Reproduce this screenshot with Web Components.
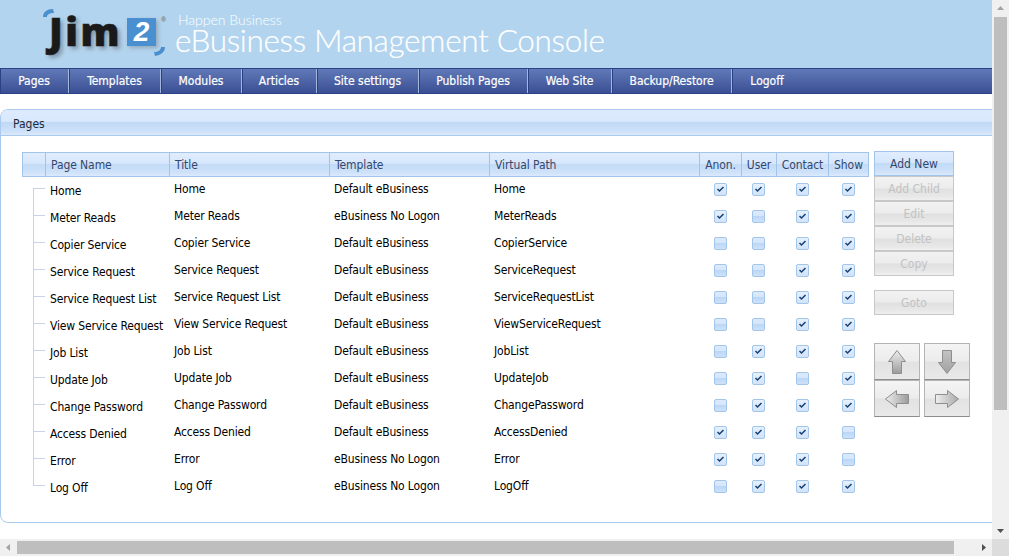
<!DOCTYPE html>
<html>
<head>
<meta charset="utf-8">
<title>eBusiness Management Console</title>
<style>
  html, body { margin: 0; height: 100%; overflow: hidden; background: #fff; }
  body { font: 12px "DejaVu Sans Condensed", "DejaVu Sans", sans-serif; color: #000; }
  jim-app { height: 556px; }
</style>
</head>
<body>
<jim-app>
  <jim-header></jim-header>
  <jim-nav></jim-nav>
  <jim-panel heading="Pages">
    <jim-pages></jim-pages>
    <jim-actions></jim-actions>
  </jim-panel>
</jim-app>
<script>
const PAGES = [
  ['Home', 'Home', 'Default eBusiness', 'Home', 1, 1, 1, 1],
  ['Meter Reads', 'Meter Reads', 'eBusiness No Logon', 'MeterReads', 1, 0, 1, 1],
  ['Copier Service', 'Copier Service', 'Default eBusiness', 'CopierService', 0, 0, 1, 1],
  ['Service Request', 'Service Request', 'Default eBusiness', 'ServiceRequest', 0, 0, 1, 1],
  ['Service Request List', 'Service Request List', 'Default eBusiness', 'ServiceRequestList', 0, 0, 1, 1],
  ['View Service Request', 'View Service Request', 'Default eBusiness', 'ViewServiceRequest', 0, 0, 1, 1],
  ['Job List', 'Job List', 'Default eBusiness', 'JobList', 0, 1, 1, 1],
  ['Update Job', 'Update Job', 'Default eBusiness', 'UpdateJob', 0, 1, 0, 1],
  ['Change Password', 'Change Password', 'Default eBusiness', 'ChangePassword', 0, 1, 1, 1],
  ['Access Denied', 'Access Denied', 'Default eBusiness', 'AccessDenied', 1, 1, 1, 0],
  ['Error', 'Error', 'eBusiness No Logon', 'Error', 1, 1, 1, 0],
  ['Log Off', 'Log Off', 'eBusiness No Logon', 'LogOff', 0, 1, 1, 1]
]
const COLUMNS = '24px 124px 160px 160px 210px 42px 34px 52px 41px'
const HEAD_COLUMNS = '22px 124px 160px 160px 210px 42px 35px 52px 40px'
const BLUE_BAR = 'linear-gradient(#e0edfd 0, #d6e6fb 48%, #c2dbf7 50%, #cfe2f9 85%, #dbe9fc 100%)'

customElements.define('jim-scrollbar', class extends HTMLElement {
  constructor() {
    super()
    this.attachShadow({mode: 'open'})
    const v = this.getAttribute('orient') === 'v'
    this.shadowRoot.innerHTML = `
    <style>
      :host { display: flex; background: #f0f0f0; flex-direction: ${v ? 'column' : 'row'}; }
      .end { flex: none; width: 17px; height: 17px; display: flex; align-items: center; justify-content: center; }
      .track { flex: 1; display: flex; flex-direction: ${v ? 'column' : 'row'}; padding: ${v ? '0 2px' : '2px 0'}; }
      .thumb { background: #bebebe; ${v ? 'height: 393px;' : 'width: 937px;'} }
      svg { display: block; }
    </style>
    <div class="end">
      <svg width="9" height="9" viewBox="0 0 9 9"><path d="${v ? 'M4.5 2L8 6H1z' : 'M6 1v7L2 4.5z'}" fill="#a3a3a3"/></svg>
    </div>
    <div class="track"><div class="thumb"></div></div>
    <div class="end">
      <svg width="9" height="9" viewBox="0 0 9 9"><path d="${v ? 'M1 3h7L4.5 7z' : 'M3 1v7l4-3.5z'}" fill="#505050"/></svg>
    </div>
    `
  }
})

customElements.define('jim-app', class extends HTMLElement {
  constructor() {
    super()
    this.attachShadow({mode: 'open'})
    this.shadowRoot.innerHTML = `
    <style>
      :host {
        display: grid;
        grid-template-columns: 992px 17px;
        grid-template-rows: 539px 17px;
        width: 1009px;
      }
      .main { overflow: hidden; display: flex; flex-direction: column; }
      .corner { background: #dcdcdc; }
    </style>
    <div class="main"><slot></slot></div>
    <jim-scrollbar orient="v"></jim-scrollbar>
    <jim-scrollbar orient="h"></jim-scrollbar>
    <div class="corner"></div>
    `
  }
})

customElements.define('jim-header', class extends HTMLElement {
  constructor() {
    super()
    this.attachShadow({mode: 'open'})
    this.shadowRoot.innerHTML = `
    <style>
      :host {
        display: flex;
        flex: none;
        height: 68px;
        background: #b3d4ee;
        padding-left: 42px;
        box-sizing: border-box;
        overflow: hidden;
      }
      .logo { position: relative; width: 133px; flex: none; }
      .jim {
        position: absolute;
        left: 7px;
        top: 6px;
        font: 900 39px/50px "Open Sans", "DejaVu Sans", sans-serif;
        letter-spacing: 2.5px;
        color: #1a1a1a;
        -webkit-text-stroke: .6px #1a1a1a;
        text-shadow: 3px 3px 4px #8496a8;
      }
      .two {
        position: absolute;
        left: 85px;
        top: 18px;
        width: 29px;
        height: 28px;
        background: #4a8fd0;
        color: #fff;
        font: italic 700 28px/28px "Liberation Sans", sans-serif;
        text-align: center;
        box-shadow: 2px 2px 4px #94a9bc;
      }
      .reg {
        position: absolute;
        left: 119px;
        top: 15px;
        font: 700 7px/10px "Liberation Sans", sans-serif;
        color: #777;
      }
      .arcs { position: absolute; left: 0; top: 0; }
      .title { color: #fff; padding: 13px 0 0 3px; font-family: Lato, "Open Sans", sans-serif; font-weight: 300; }
      .sub { font-size: 14px; line-height: 13px; }
      .name { font-size: 31.5px; line-height: 29px; letter-spacing: -.33px; white-space: nowrap; -webkit-text-stroke: .2px #fff; margin-left: -3px; }
    </style>
    <div class="logo">
      <svg class="arcs" width="133" height="68" viewBox="0 0 133 68">
        <path d="M1 17C1 12 5 9 11 9L12 13C8 13 5 14 5 17z" fill="#4a8fd0"/>
        <path d="M123 47C123 52 119 55 113 56L112 52C116 52 119 50 119 47z" fill="#4a8fd0"/>
      </svg>
      <span class="jim">Jim</span>
      <span class="two">2</span>
      <span class="reg">®</span>
    </div>
    <div class="title">
      <div class="sub">Happen Business</div>
      <div class="name">eBusiness Management Console</div>
    </div>
    `
  }
})

customElements.define('jim-nav', class extends HTMLElement {
  constructor() {
    super()
    this.attachShadow({mode: 'open'})
    const items = [['Pages', 69], ['Templates', 92], ['Modules', 81], ['Articles', 75], ['Site settings', 102], ['Publish Pages', 109], ['Web Site', 84], ['Backup/Restore', 120], ['Logoff', 70]]
    this.shadowRoot.innerHTML = `
    <style>
      :host {
        display: flex;
        flex: none;
        height: 26px;
        box-sizing: border-box;
        border-top: 1px solid #2c4183;
        border-bottom: 1px solid #2c4183;
        background: linear-gradient(#6079b8, #3b4f94);
        color: #fff;
        font-size: 12px;
      }
      a {
        flex: none;
        box-sizing: border-box;
        display: flex;
        align-items: center;
        justify-content: center;
        border-right: 1px solid #a5b6dd;
        box-shadow: 1px 0 0 #2c4183 inset;
        -webkit-text-stroke: .2px #fff;
      }
      a:first-child { background: linear-gradient(#4f6bae, #28407f); box-shadow: none; }
      a:last-child { border-right: none; }
    </style>
    ${items.map(([t, w]) => `<a style="width:${w}px">${t}</a>`).join('')}
    `
  }
})

customElements.define('jim-panel', class extends HTMLElement {
  constructor() {
    super()
    this.attachShadow({mode: 'open'})
    this.shadowRoot.innerHTML = `
    <style>
      :host {
        display: block;
        flex: none;
        width: 1030px;
        height: 414px;
        margin-top: 15px;
        box-sizing: border-box;
        border: 1px solid #a9c9ee;
        border-radius: 8px;
        overflow: hidden;
      }
      header {
        height: 26px;
        padding: 2px 0 0 12px;
        box-sizing: border-box;
        line-height: 25px;
        background: linear-gradient(#deebfe 0, #d9e8fd 45%, #bfd9f6 50%, #cee1f9 85%, #dbe9fc 100%);
        border-bottom: 1px solid #a9c9ee;
        color: #1c2a3a;
      }
      .body { display: flex; align-items: flex-start; gap: 5px; padding: 16px 0 0 21px; }
    </style>
    <header>${this.getAttribute('heading')}</header>
    <div class="body"><slot></slot></div>
    `
  }
})

customElements.define('jim-check', class extends HTMLElement {
  constructor() {
    super()
    this.attachShadow({mode: 'open'})
    const on = this.hasAttribute('checked')
    this.shadowRoot.innerHTML = `
    <style>
      :host {
        display: block;
        width: 13px;
        height: 13px;
        box-sizing: border-box;
        border: 1px solid #a2c5ea;
        border-radius: 2px;
        background: ${on ? 'linear-gradient(#e6f1fd, #dbe9fb 50%, #d2e3f9)' : 'linear-gradient(#dbe9fb 0, #d6e6fa 45%, #bcd7f5 50%, #cfe1f9 100%)'};
      }
      svg { display: block; }
    </style>
    ${on ? '<svg width="11" height="11" viewBox="0 0 11 11"><path d="M2.500 5L4.500 7L8.500 3" fill="none" stroke="#173f73" stroke-width="1.500"/></svg>' : ''}
    `
  }
})

customElements.define('jim-row', class extends HTMLElement {
  constructor() {
    super()
    this.attachShadow({mode: 'open'})
  }
  set data(p) {
    this.shadowRoot.innerHTML = `
    <style>
      :host {
        display: grid;
        grid-template-columns: ${COLUMNS};
        height: 27px;
      }
      .tree { position: relative; }
      .tree::before {
        content: '';
        position: absolute;
        left: 11px;
        top: 0;
        bottom: 0;
        border-left: 1px solid #c9d2e6;
      }
      .tree::after {
        content: '';
        position: absolute;
        left: 11px;
        width: 12px;
        top: 11px;
        border-top: 1px solid #c9d2e6;
      }
      :host([first]) .tree::before { top: 11px; }
      :host([last]) .tree::before { bottom: 15px; }
      .name { padding: 7px 0 0 4px; line-height: 14px; white-space: nowrap; letter-spacing: -.15px; }
      .text { padding: 5px 0 0 4px; line-height: 15px; white-space: nowrap; letter-spacing: -.15px; }
      .chk { display: flex; justify-content: center; padding-top: 6px; }
      .nudge { padding-right: 1px; }
    </style>
    <div class="tree"></div>
    <div class="name">${p[0]}</div>
    <div class="text">${p[1]}</div>
    <div class="text">${p[2]}</div>
    <div class="text">${p[3]}</div>
    ${p.slice(4).map((c, i) => `<div class="chk ${i < 2 ? 'nudge' : ''}"><jim-check ${c ? 'checked' : ''}></jim-check></div>`).join('')}
    `
  }
})

customElements.define('jim-pages', class extends HTMLElement {
  constructor() {
    super()
    this.attachShadow({mode: 'open'})
    const heads = ['', 'Page Name', 'Title', 'Template', 'Virtual Path', 'Anon.', 'User', 'Contact', 'Show']
    this.shadowRoot.innerHTML = `
    <style>
      :host { display: block; width: 847px; flex: none; }
      .head {
        display: grid;
        grid-template-columns: ${HEAD_COLUMNS};
        height: 25px;
        box-sizing: border-box;
        border: 1px solid #a2c3ea;
        background: ${BLUE_BAR};
        color: #33476e;
      }
      .head div { line-height: 24px; padding-left: 5px; border-left: 1px solid #a2c3ea; white-space: nowrap; box-sizing: border-box; letter-spacing: -.08px; }
      .head div:first-child { border-left: none; }
      .head .c { padding: 0; text-align: center; }
    </style>
    <div class="head">${heads.map((h, i) => `<div class="${i > 4 ? 'c' : ''}">${h}</div>`).join('')}</div>
    <div class="rows"></div>
    `
    const rows = this.shadowRoot.querySelector('.rows')
    PAGES.forEach((p, i) => {
      const row = document.createElement('jim-row')
      row.data = p
      if (i === PAGES.length - 1) row.setAttribute('last', '')
      if (i === 0) row.setAttribute('first', '')
      rows.append(row)
    })
  }
})

customElements.define('jim-button', class extends HTMLElement {
  constructor() {
    super()
    this.attachShadow({mode: 'open'})
    const on = this.hasAttribute('active')
    this.shadowRoot.innerHTML = `
    <style>
      :host {
        display: flex;
        align-items: center;
        justify-content: center;
        width: 80px;
        height: 25px;
        box-sizing: border-box;
        border: 1px solid ${on ? '#a2c3ea' : '#c8c8c8'};
        background: ${on ? BLUE_BAR : 'linear-gradient(#f2f2f2 0, #ececec 48%, #e0e0e0 52%, #e8e8e8 85%, #efefef 100%)'};
        color: ${on ? '#33476e' : '#c2c2c2'};
      }
    </style>
    <slot></slot>
    `
  }
})

customElements.define('jim-arrow', class extends HTMLElement {
  constructor() {
    super()
    this.attachShadow({mode: 'open'})
    const name = this.getAttribute('dir')
    const dir = {up: 0, right: 90, down: 180, left: 270}[name]
    // tip colour, tail colour
    const [tip, tail] = {up: ['#f0f0f0', '#9a9a9a'], left: ['#f0f0f0', '#9a9a9a'], down: ['#a0a0a0', '#c4c4c4'], right: ['#a8a8a8', '#f0f0f0']}[name]
    this.shadowRoot.innerHTML = `
    <style>
      :host {
        display: flex;
        align-items: center;
        justify-content: center;
        height: 37px;
        box-sizing: border-box;
        border: 1px solid #b4b4b4;
        border-bottom-color: #8c8c8c;
        background: linear-gradient(#f4f4f4 0, #ececec 48%, #e2e2e2 52%, #e9e9e9 100%);
      }
      svg { display: block; }
    </style>
    <svg width="26" height="26" viewBox="0 0 26 26">
      <defs><linearGradient id="arrow" gradientUnits="userSpaceOnUse" x1="13" x2="13" y1="1" y2="25">
        <stop offset="0" stop-color="${tip}"/><stop offset="1" stop-color="${tail}"/>
      </linearGradient></defs>
      <path transform="rotate(${dir} 13 13)" d="M13 1.500L21.500 12.500H17.500V24.500H8.500V12.500H4.500z" fill="url(#arrow)" stroke="#8e8e8e"/>
    </svg>
    `
  }
})

customElements.define('jim-actions', class extends HTMLElement {
  constructor() {
    super()
    this.attachShadow({mode: 'open'})
    this.shadowRoot.innerHTML = `
    <style>
      :host { display: flex; flex-direction: column; flex: none; width: 96px; margin-top: -1px; }
      .goto { margin-top: 14px; }
      .arrows { display: grid; grid-template-columns: 46px 46px; column-gap: 4px; margin-top: 28px; }
    </style>
    <jim-button active>Add New</jim-button>
    <jim-button>Add Child</jim-button>
    <jim-button>Edit</jim-button>
    <jim-button>Delete</jim-button>
    <jim-button>Copy</jim-button>
    <jim-button class="goto">Goto</jim-button>
    <div class="arrows">
      <jim-arrow dir="up"></jim-arrow>
      <jim-arrow dir="down"></jim-arrow>
      <jim-arrow dir="left"></jim-arrow>
      <jim-arrow dir="right"></jim-arrow>
    </div>
    `
  }
})
</script>
</body>
</html>
